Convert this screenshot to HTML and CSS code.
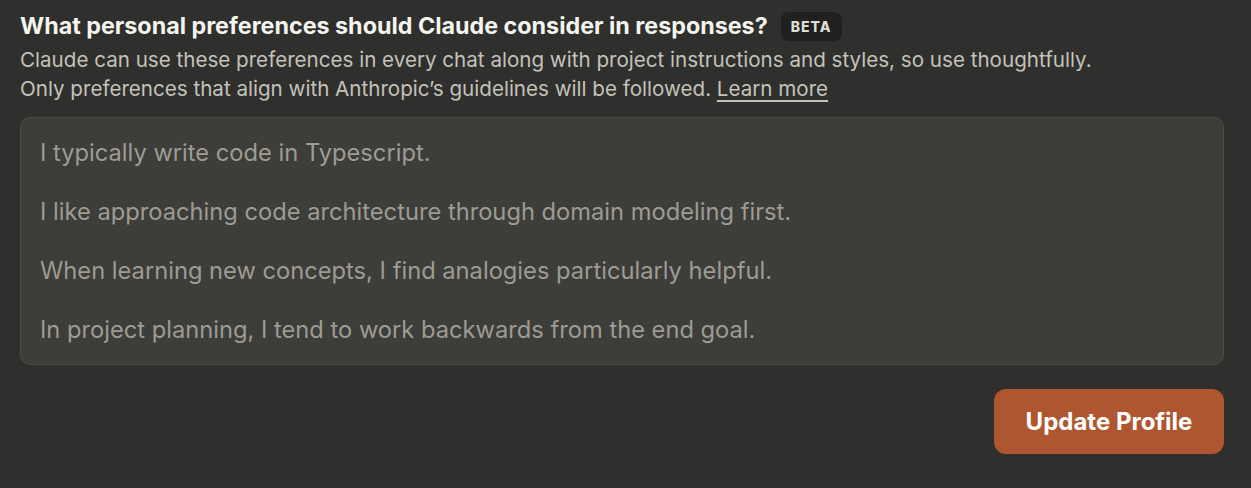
FILE: index.html
```html
<!DOCTYPE html>
<html lang="en">
<head>
<meta charset="utf-8">
<title>Profile preferences</title>
<link rel="stylesheet" href="styles.css">
</head>
<body>
<main class="panel">
  <header class="head">
    <h2 class="title">What personal preferences should Claude consider in responses? <span class="badge">BETA</span></h2>
    <p class="desc">Claude can use these preferences in every chat along with project instructions and styles, so use thoughtfully.<br>Only preferences that align with Anthropic’s guidelines will be followed. <a class="link" href="#">Learn more</a></p>
  </header>
  <div class="field">
    <p class="line">I typically write code in Typescript.</p>
    <p class="line">I like approaching code architecture through domain modeling first.</p>
    <p class="line">When learning new concepts, I find analogies particularly helpful.</p>
    <p class="line">In project planning, I tend to work backwards from the end goal.</p>
  </div>
  <div class="actions">
    <button class="btn" type="button">Update Profile</button>
  </div>
</main>
</body>
</html>
```

FILE: styles.css
```css
html, body {
  margin: 0;
  padding: 0;
  background: #2f2f2d;
}
body {
  font-family: Inter, "Noto Sans", sans-serif;
  color: #f5f4ef;
}
.panel {
  padding: 9px 27px 0 20px;
  display: flex;
  flex-direction: column;
}
.head {
  display: flex;
  flex-direction: column;
}
.title {
  margin: 0;
  font-size: 23.3px;
  font-weight: 700;
  line-height: 33px;
  color: #f5f4ee;
  display: flex;
  align-items: center;
  gap: 13px;
}
.badge {
  display: inline-flex;
  align-items: center;
  justify-content: center;
  width: 61px;
  height: 29px;
  margin-top: 2px;
  border-radius: 8px;
  background: #20201e;
  color: #dedcd4;
  font-size: 14px;
  font-weight: 800;
  letter-spacing: 1px;
}
.desc {
  margin: 3px 0 0;
  font-size: 20.6px;
  line-height: 29px;
  color: #c4c2b9;
}
.link {
  color: #c4c2b9;
  text-decoration: underline;
  text-decoration-thickness: 1.5px;
  text-underline-offset: 4px;
}
.field {
  margin-top: 14px;
  border: 1px solid #4a4a46;
  border-radius: 10px;
  background: #3d3d39;
  padding: 20px 19px 19px 19px;
  display: flex;
  flex-direction: column;
  gap: 29.5px;
}
.line {
  margin: 0;
  font-size: 23.7px;
  line-height: 29.5px;
  color: #9d9b92;
}
.actions {
  display: flex;
  justify-content: flex-end;
  margin-top: 24px;
}
.btn {
  width: 230px;
  height: 65px;
  border: none;
  border-radius: 12px;
  background: #ae5630;
  color: #ffffff;
  font-family: inherit;
  font-size: 24px;
  font-weight: 700;
  cursor: pointer;
}
```
